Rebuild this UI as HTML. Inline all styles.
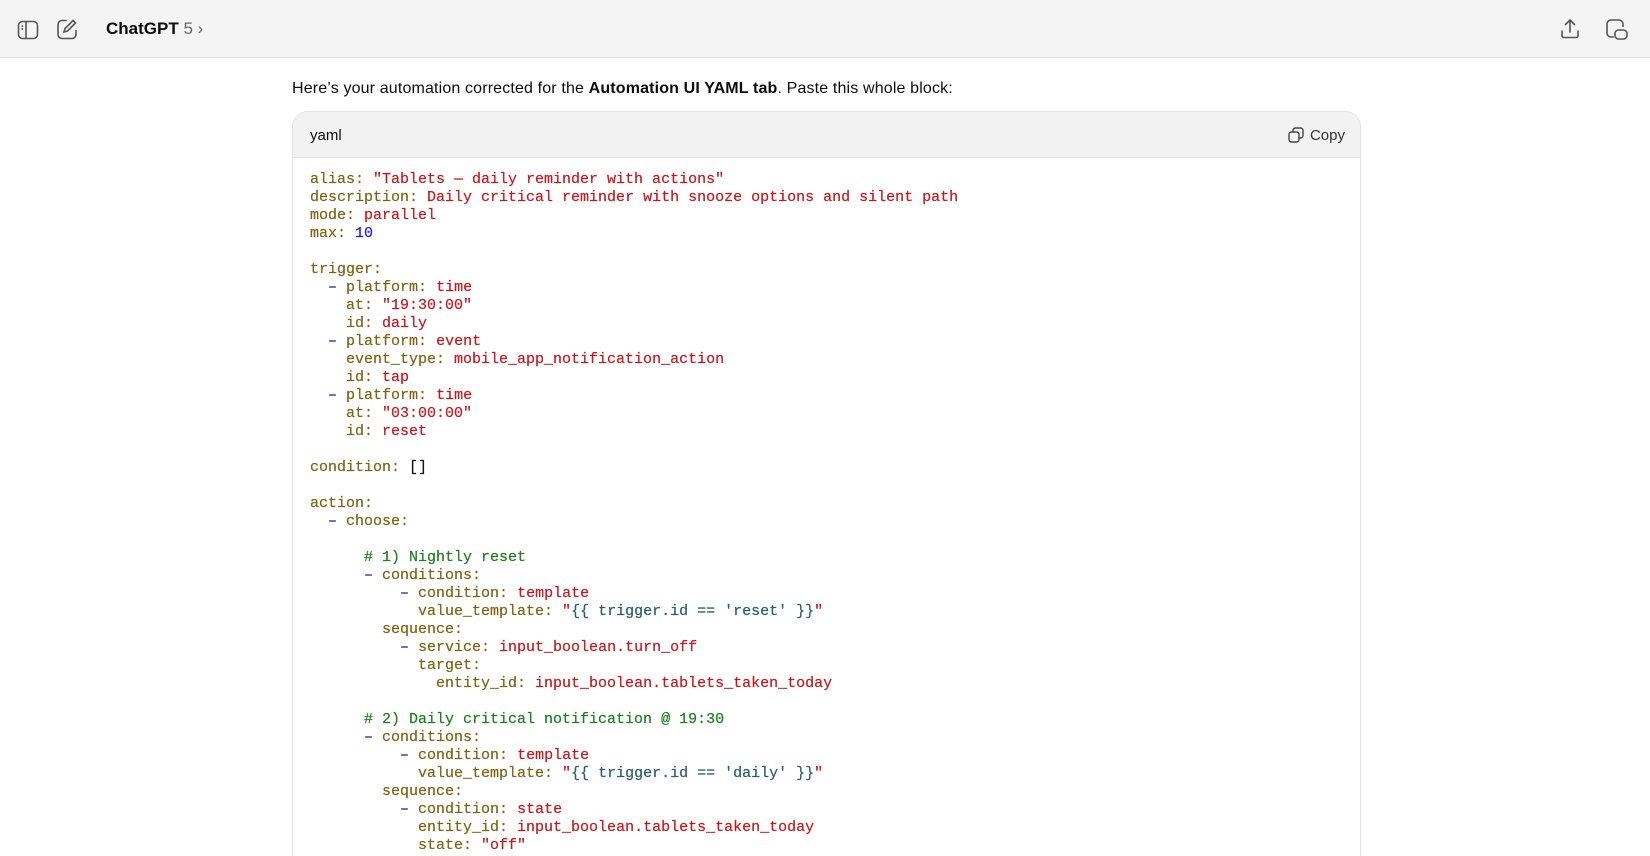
<!DOCTYPE html>
<html><head><meta charset="utf-8"><style>
*{margin:0;padding:0;box-sizing:border-box}
html,body{width:1650px;height:856px;overflow:hidden}
body{background:#fff;font-family:"Liberation Sans",sans-serif;color:#0d0d0d;position:relative}
.top{position:absolute;left:0;top:0;width:1650px;height:58px;background:#f4f4f4;border-bottom:1px solid #e3e3e3}
.title{position:absolute;left:106px;top:19px;font-size:17px;font-weight:bold}
.title span{font-weight:normal;color:#666}
.intro{position:absolute;left:292px;top:80px;font-size:16px;letter-spacing:0.15px}
.box{position:absolute;left:292px;top:111px;width:1069px;height:745px;border:1px solid #e3e3e3;border-bottom:none;border-radius:16px 16px 0 0;overflow:hidden}
.hd{height:46px;background:#f2f2f2;border-bottom:1px solid #e6e6e6;position:relative}
.hd .l{position:absolute;left:17px;top:15px;font-size:15px}
.hd .r{position:absolute;right:15px;top:15px;font-size:15px;color:#333}
pre{font-family:"Liberation Mono",monospace;font-size:15px;line-height:18px;padding:13px 0 0 17px;color:#7c6414;-webkit-text-stroke:0.2px}
.s{color:#c8161a}.n{color:#1a1aff}.d{color:#1a1ab8}.c{color:#1c7d1c}.t{color:#2d5c6e}.b{color:#111}
</style></head><body>
<div class="top">
<svg style="position:absolute;left:17px;top:19px" width="22" height="22" viewBox="0 0 22 22" fill="none" stroke="#555" stroke-width="1.6"><rect x="1.5" y="2.5" width="19" height="17" rx="4"/><line x1="9" y1="2.5" x2="9" y2="19.5"/><line x1="4.5" y1="7" x2="6" y2="7"/><line x1="4.5" y1="10" x2="6" y2="10"/></svg>
<svg style="position:absolute;left:56px;top:18px" width="22" height="22" viewBox="0 0 22 22" fill="none" stroke="#555" stroke-width="1.6" stroke-linecap="round"><path d="M10 2.5H6a4 4 0 0 0-4 4v10a4 4 0 0 0 4 4h10a4 4 0 0 0 4-4v-4"/><path d="M17 2.5l2.5 2.5-8 8-3.5 1 1-3.5z"/></svg>
<div class="title">ChatGPT <span>5 ›</span></div>
<svg style="position:absolute;left:1559px;top:18px" width="22" height="22" viewBox="0 0 22 22" fill="none" stroke="#555" stroke-width="1.6" stroke-linecap="round"><path d="M11 2v12M6.5 6.5 11 2l4.5 4.5M3 13v5a1.5 1.5 0 0 0 1.5 1.5h13A1.5 1.5 0 0 0 19 18v-5"/></svg>
<svg style="position:absolute;left:1605px;top:18px" width="24" height="24" viewBox="0 0 24 24" fill="none" stroke="#555" stroke-width="1.6"><path d="M9 19H6a4 4 0 0 1-4-4V6a4 4 0 0 1 4-4h8a4 4 0 0 1 4 4v3"/><rect x="10" y="12" width="12" height="9" rx="3.5"/></svg>
</div>
<div class="intro">Here’s your automation corrected for the <b>Automation UI YAML tab</b>. Paste this whole block:</div>
<div class="box">
<div class="hd"><div class="l">yaml</div><div class="r"><svg style="vertical-align:-3px;margin-right:6px" width="16" height="16" viewBox="0 0 16 16" fill="none" stroke="#444" stroke-width="1.4"><rect x="1" y="5" width="10" height="10" rx="2.5"/><path d="M5 5V3.5A2.5 2.5 0 0 1 7.5 1h5A2.5 2.5 0 0 1 15 3.5v5a2.5 2.5 0 0 1-2.5 2.5H11"/></svg>Copy</div></div>
<pre>alias: <span class="s">"Tablets — daily reminder with actions"</span>
description: <span class="s">Daily critical reminder with snooze options and silent path</span>
mode: <span class="s">parallel</span>
max: <span class="n">10</span>

trigger:
  <span class="d">–</span> platform: <span class="s">time</span>
    at: <span class="s">"19:30:00"</span>
    id: <span class="s">daily</span>
  <span class="d">–</span> platform: <span class="s">event</span>
    event_type: <span class="s">mobile_app_notification_action</span>
    id: <span class="s">tap</span>
  <span class="d">–</span> platform: <span class="s">time</span>
    at: <span class="s">"03:00:00"</span>
    id: <span class="s">reset</span>

condition: <span class="b">[]</span>

action:
  <span class="d">–</span> choose:

      <span class="c"># 1) Nightly reset</span>
      <span class="d">–</span> conditions:
          <span class="d">–</span> condition: <span class="s">template</span>
            value_template: <span class="s">"</span><span class="t">{{ trigger.id == 'reset' }}</span><span class="s">"</span>
        sequence:
          <span class="d">–</span> service: <span class="s">input_boolean.turn_off</span>
            target:
              entity_id: <span class="s">input_boolean.tablets_taken_today</span>

      <span class="c"># 2) Daily critical notification @ 19:30</span>
      <span class="d">–</span> conditions:
          <span class="d">–</span> condition: <span class="s">template</span>
            value_template: <span class="s">"</span><span class="t">{{ trigger.id == 'daily' }}</span><span class="s">"</span>
        sequence:
          <span class="d">–</span> condition: <span class="s">state</span>
            entity_id: <span class="s">input_boolean.tablets_taken_today</span>
            state: <span class="s">"off"</span>
</pre>
</div>
</body></html>
